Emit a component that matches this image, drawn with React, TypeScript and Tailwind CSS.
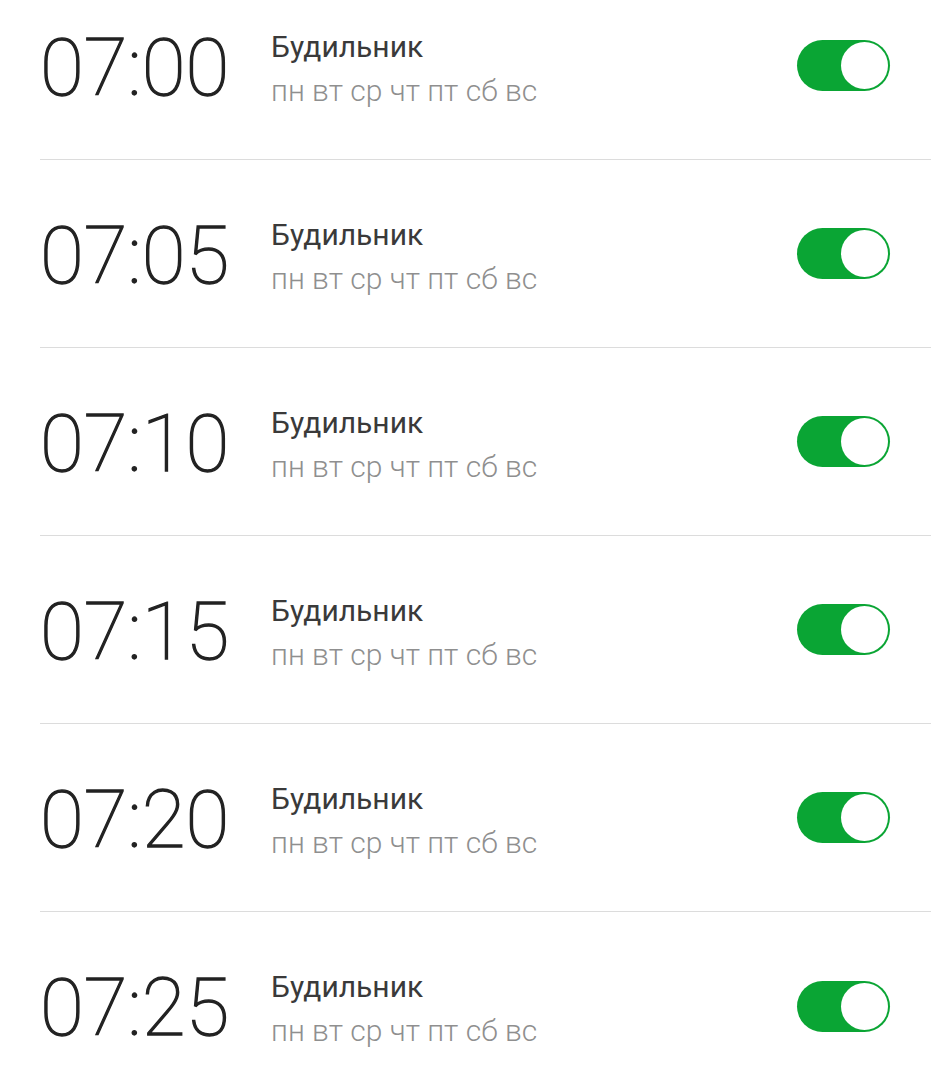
const alarms = ["07:00", "07:05", "07:10", "07:15", "07:20", "07:25"];

const Toggle = () => (
  <div className="w-[93px] h-[51px] rounded-full bg-[#0aa534] p-[2px] flex justify-end">
    <div className="w-[47px] h-[47px] rounded-full bg-white" />
  </div>
);

export default function App() {
  return (
    <div className="min-h-screen bg-white overflow-hidden font-['Roboto',sans-serif]">
      <div className="-mt-[28px]">
        {alarms.map((t, i) => (
          <div key={t} className="pl-[40px]">
            <div
              className={
                "h-[188px] flex items-center pr-[41px] " +
                (i < alarms.length - 1 ? "border-b border-[#dcdcdc]" : "")
              }
            >
              <div className="w-[231px] mt-[4px] text-[80px] font-thin text-[#222] leading-none tracking-[0px] [-webkit-text-stroke:1.3px_#222]">
                {t}
              </div>
              <div className="flex-1 flex flex-col mt-[6px]">
                <span className="text-[30px] text-[#3a3a3a] leading-[44px]">Будильник</span>
                <span className="text-[30px] font-light text-[#8f8f8f] leading-[44px]">пн вт ср чт пт сб вс</span>
              </div>
              <Toggle />
            </div>
          </div>
        ))}
      </div>
    </div>
  );
}
